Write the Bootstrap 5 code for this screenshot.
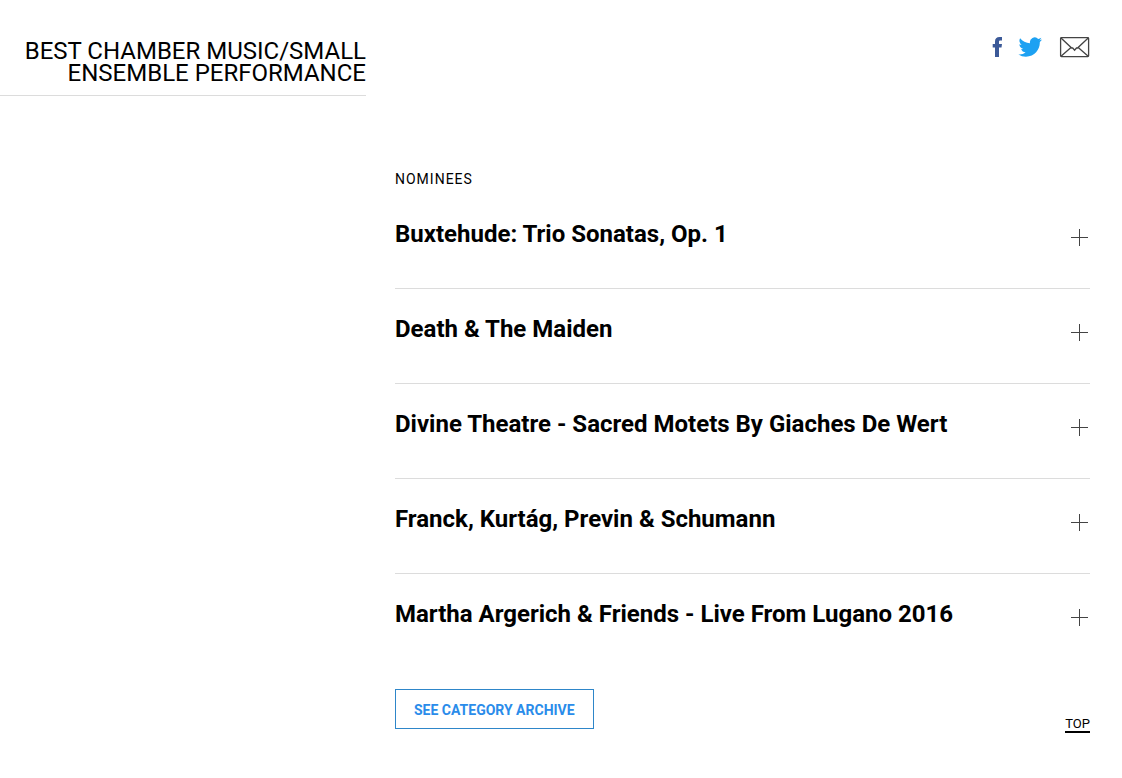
<!DOCTYPE html>
<html lang="en">
<head>
<meta charset="utf-8">
<meta name="viewport" content="width=device-width, initial-scale=1">
<title>Best Chamber Music/Small Ensemble Performance</title>
<link href="https://cdn.jsdelivr.net/npm/bootstrap@5.3.0/dist/css/bootstrap.min.css" rel="stylesheet">
<style>
  body { font-family: Roboto, "Liberation Sans", sans-serif; color: #000; background: #fff; }
  .category-title { font-size: 24px; line-height: 22px; font-weight: 400; padding: 40px 0 11px; border-bottom: 1px solid #dcdcdc; }
  .share { gap: 16px; padding-top: 36px; }
  .share a, .share svg { display: block; }
  .main-col { padding-left: 21px; padding-right: 32px; }
  .section-label { font-size: 14px; line-height: 20px; font-weight: 400; letter-spacing: 1px; margin: 111px 0 5px; }
  .nominee { border-bottom: 1px solid #dcdcdc; }
  .nominee:last-child { border-bottom: 0; }
  .nominee button { padding: 25px 2px 39px 0; font-size: 24px; line-height: 30px; font-weight: 700; color: #000; }
  .nominee svg { margin-top: 9px; }
  .page-actions { padding-top: 21px; }
  .archive-btn { --bs-btn-color: #2a8cea; --bs-btn-border-color: #2e86c9; --bs-btn-border-radius: 0; --bs-btn-hover-bg: #2a8cea; --bs-btn-hover-color: #fff;
    font-size: 14px; line-height: 20px; font-weight: 700; padding: 10px 18px 8px; }
  .top-link { font-size: 13px; line-height: 14px; color: #000; border-bottom: 2px solid #000; }
</style>
</head>
<body>
<main class="row g-0">
  <div class="col-4 pe-2">
    <h1 class="category-title text-end text-uppercase m-0">Best Chamber Music/Small Ensemble Performance</h1>
  </div>
  <div class="col-8 main-col">
    <nav class="share d-flex justify-content-end align-items-center" aria-label="Share">
      <a href="#facebook" aria-label="Facebook">
        <svg width="10" height="22" viewBox="0 0 10 22"><path fill="#3b5998" d="M3 21V11.500H.7V8H3V5.500C3 2.500 4.600 1 7.500 1H10v3.500H8.400C7.200 4.500 7 5 7 6v2h3l-.5 3.500H7V21z"/></svg>
      </a>
      <a href="#twitter" aria-label="Twitter">
        <svg width="25" height="22" viewBox="0 0 25 22"><path transform="translate(.4 1.200)" fill="#1da1f2" d="M23.600 2.400c-.9.400-1.800.7-2.800.8 1-.6 1.800-1.600 2.100-2.700-.9.600-2 1-3.100 1.200A4.850 4.850 0 0 0 11.600 6.100C7.600 5.900 4 4 1.700 1.100A4.850 4.850 0 0 0 3.200 7.600c-.8 0-1.500-.2-2.200-.6v.1c0 2.300 1.700 4.300 3.900 4.700-.7.200-1.500.2-2.200.1.600 1.900 2.400 3.300 4.500 3.400A9.800 9.800 0 0 1 0 17.300 13.900 13.900 0 0 0 7.500 19.500c9.100 0 14.300-7.700 13.900-14.600 1-.7 1.800-1.500 2.200-2.500z"/></svg>
      </a>
      <a href="#email" aria-label="Email">
        <svg width="31" height="22" viewBox="0 0 31 22" fill="none" stroke="#444" stroke-width="1.300"><rect x="1.600" y="1.600" width="28" height="19" rx=".8"/><path d="M2 2l10.700 10h1l1.900 2.200L17.500 12h1L29.200 2M2 20.300l10-8.900M29.200 20.300l-10-8.900"/></svg>
      </a>
    </nav>
    <h2 class="section-label text-uppercase">Nominees</h2>
    <ul class="list-unstyled m-0">
      <li class="nominee"><button type="button" class="w-100 d-flex justify-content-between align-items-start text-start border-0 bg-transparent" aria-expanded="false">Buxtehude: Trio Sonatas, Op. 1<svg width="18" height="18" viewBox="0 0 18 18" stroke="#444" aria-hidden="true"><path d="M1 9.500h17M9.500 1v17"/></svg></button></li>
      <li class="nominee"><button type="button" class="w-100 d-flex justify-content-between align-items-start text-start border-0 bg-transparent" aria-expanded="false">Death &amp; The Maiden<svg width="18" height="18" viewBox="0 0 18 18" stroke="#444" aria-hidden="true"><path d="M1 9.500h17M9.500 1v17"/></svg></button></li>
      <li class="nominee"><button type="button" class="w-100 d-flex justify-content-between align-items-start text-start border-0 bg-transparent" aria-expanded="false">Divine Theatre - Sacred Motets By Giaches De Wert<svg width="18" height="18" viewBox="0 0 18 18" stroke="#444" aria-hidden="true"><path d="M1 9.500h17M9.500 1v17"/></svg></button></li>
      <li class="nominee"><button type="button" class="w-100 d-flex justify-content-between align-items-start text-start border-0 bg-transparent" aria-expanded="false">Franck, Kurtág, Previn &amp; Schumann<svg width="18" height="18" viewBox="0 0 18 18" stroke="#444" aria-hidden="true"><path d="M1 9.500h17M9.500 1v17"/></svg></button></li>
      <li class="nominee"><button type="button" class="w-100 d-flex justify-content-between align-items-start text-start border-0 bg-transparent" aria-expanded="false">Martha Argerich &amp; Friends - Live From Lugano 2016<svg width="18" height="18" viewBox="0 0 18 18" stroke="#444" aria-hidden="true"><path d="M1 9.500h17M9.500 1v17"/></svg></button></li>
    </ul>
    <div class="page-actions d-flex justify-content-between align-items-end">
      <a href="#archive" class="btn archive-btn text-uppercase mb-1">See Category Archive</a>
      <a href="#top" class="top-link text-uppercase text-decoration-none">Top</a>
    </div>
  </div>
</main>
<script src="https://cdn.jsdelivr.net/npm/bootstrap@5.3.0/dist/js/bootstrap.bundle.min.js"></script>
</body>
</html>
